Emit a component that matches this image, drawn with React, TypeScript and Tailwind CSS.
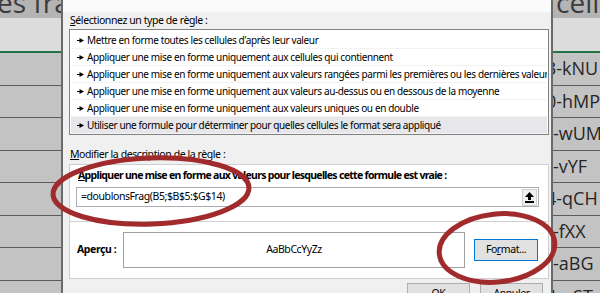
import React from "react";

const rules = [
  "Mettre en forme toutes les cellules d'après leur valeur",
  "Appliquer une mise en forme uniquement aux cellules qui contiennent",
  "Appliquer une mise en forme uniquement aux valeurs rangées parmi les premières ou les dernières valeurs",
  "Appliquer une mise en forme uniquement aux valeurs au-dessus ou en dessous de la moyenne",
  "Appliquer une mise en forme uniquement aux valeurs uniques ou en double",
  "Utiliser une formule pour déterminer pour quelles cellules le format sera appliqué",
];

// cells that begin with a digit are partly hidden behind the dialog
const rightCells = [
  { text: "3-kNU", cut: true },
  { text: "0-hMP", cut: true },
  { text: "-wUM", cut: false },
  { text: "-vYF", cut: false },
  { text: "4-qCH", cut: true },
  { text: "-fXX", cut: false },
  { text: "-aBG", cut: false },
  { text: "4-nST", cut: true },
];

const ui = { fontFamily: '"Noto Sans", "Open Sans", sans-serif' };
const sheet = { fontFamily: '"Open Sans", "Liberation Sans", sans-serif' };

function RuleArrow() {
  return (
    <svg width="7" height="5" viewBox="0 0 7 5" className="shrink-0">
      <rect x="0" y="2" width="3" height="1" fill="#000" />
      <polygon points="2.5,0 7,2.5 2.5,5" fill="#000" />
    </svg>
  );
}

function UploadIcon() {
  return (
    <svg width="9" height="11" viewBox="0 0 9 11">
      <polygon points="4.5,0 9,5 6,5 6,8 3,8 3,5 0,5" fill="#000" />
      <rect x="0" y="9" width="9" height="2" fill="#000" />
    </svg>
  );
}

function SheetStrip({ side }: { side: "left" | "right" }) {
  const left = side === "left";
  return (
    <div
      style={sheet}
      className={`flex flex-col h-full shrink-0 overflow-hidden bg-[#c3c3c3] ${
        left ? "w-[63px] border-r-2 border-[#6a6a6a]" : "w-[49px] border-l-2 border-[#6a6a6a]"
      }`}
    >
      <div className="h-[18px] shrink-0 bg-[#b4b4b4] overflow-hidden relative">
        <span
          className={`absolute top-[-12px] text-[28px] leading-none text-[#3c3c3c] whitespace-nowrap ${
            left ? "left-[-3px]" : "left-[3px]"
          }`}
        >
          {left ? "es frag" : "cellu"}
        </span>
      </div>
      <div className="h-[35px] shrink-0 bg-[#dcdcdc] border-b-2 border-[#217346]" />
      {left
        ? Array.from({ length: 8 }).map((_, i) => (
            <div key={i} className="h-[32.5px] shrink-0 border-b border-[#5c5c5c]" />
          ))
        : rightCells.map((c) => (
            <div
              key={c.text}
              className="h-[32.5px] shrink-0 border-b border-[#5c5c5c] flex items-center text-[18px] text-[#262626] whitespace-nowrap overflow-hidden"
            >
              <span className={c.cut ? "ml-[-7px]" : ""}>{c.text}</span>
            </div>
          ))}
    </div>
  );
}

export default function App() {
  return (
    <div className="relative w-[600px] h-[293px] overflow-hidden flex bg-[#f0f0f0]">
      <SheetStrip side="left" />

      {/* Dialog */}
      <div
        style={ui}
        className="flex-1 min-w-0 overflow-hidden flex flex-col bg-[#f0f0f0] text-[10.5px] tracking-[-0.42px] text-black"
      >
        <div className="h-[12px] shrink-0 bg-[#fbfbfb]" />
        <div className="pl-[7px] h-[17px] shrink-0 flex items-center">
          <span>
            <span className="underline">S</span>électionnez un type de règle :
          </span>
        </div>

        <div className="ml-[6px] w-[480px] h-[106px] shrink-0 overflow-hidden bg-white border border-[#828282] pt-[2px] px-[1px] text-[10px] tracking-[-0.38px]">
          {rules.map((r, i) => (
            <div
              key={r}
              className={`h-[17px] flex items-center gap-[3px] pl-[6px] whitespace-nowrap overflow-hidden border-b border-[#f2f2f2] ${
                i === rules.length - 1 ? "bg-[#e6e6eb]" : ""
              }`}
            >
              <RuleArrow />
              <span>{r}</span>
            </div>
          ))}
        </div>

        <div className="pl-[7px] h-[29px] shrink-0 flex items-end pb-[1px]">
          <span>
            <span className="underline">M</span>odifier la description de la règle :
          </span>
        </div>

        <div className="ml-[6px] w-[480px] h-[115px] shrink-0 bg-white border border-[#cfcfcf] flex flex-col">
          <div className="h-[57px] shrink-0 border-b border-[#cfcfcf] px-[6px]">
            <div className="h-[22px] pl-[2px] flex items-center font-bold text-[10.5px] tracking-[-0.7px] whitespace-nowrap">
              <span>
                <span className="underline">A</span>ppliquer une mise en forme aux valeurs pour lesquelles cette formule
                est vraie :
              </span>
            </div>
            <div className="w-[463px] h-[20px] border border-[#abadb3] flex items-center pl-[4px] pr-[1px]">
              <span className="flex-1">=doublonsFrag(B5;$B$5:$G$14)</span>
              <div className="w-[15px] h-[17px] bg-[#f0f0f0] border border-[#d0d0d0] flex items-center justify-center">
                <UploadIcon />
              </div>
            </div>
          </div>
          <div className="flex-1 flex items-center pl-[7px] pr-[10px]">
            <span className="w-[46px] font-bold">Aperçu :</span>
            <div className="w-[343px] h-[36px] border border-[#a0a0a0] bg-white flex items-center justify-center">
              AaBbCcYyZz
            </div>
            <div className="ml-[9px] w-[64px] h-[22px] bg-[#e1e1e1] border border-[#0078d7] flex items-center justify-center">
              <span>
                Fo<span className="underline">r</span>mat...
              </span>
            </div>
          </div>
        </div>

        <div className="flex shrink-0 pl-[344px] gap-[10px] pt-[4px]">
          <div className="w-[63px] h-[22px] shrink-0 bg-[#e1e1e1] border border-[#adadad] flex items-center justify-center">
            OK
          </div>
          <div className="w-[63px] h-[22px] shrink-0 bg-[#e1e1e1] border border-[#adadad] flex items-center justify-center">
            Annuler
          </div>
        </div>
      </div>

      <SheetStrip side="right" />

      {/* Red hand-drawn circles */}
      <svg className="absolute inset-0 pointer-events-none" width="600" height="293" viewBox="0 0 600 293">
        <ellipse cx="151" cy="191" rx="98" ry="33" fill="none" stroke="#a02a2c" strokeWidth="5" transform="rotate(-2 151 191)" />
        <ellipse cx="497" cy="248" rx="58" ry="34" fill="none" stroke="#a02a2c" strokeWidth="5" transform="rotate(-6 497 248)" />
      </svg>
    </div>
  );
}
